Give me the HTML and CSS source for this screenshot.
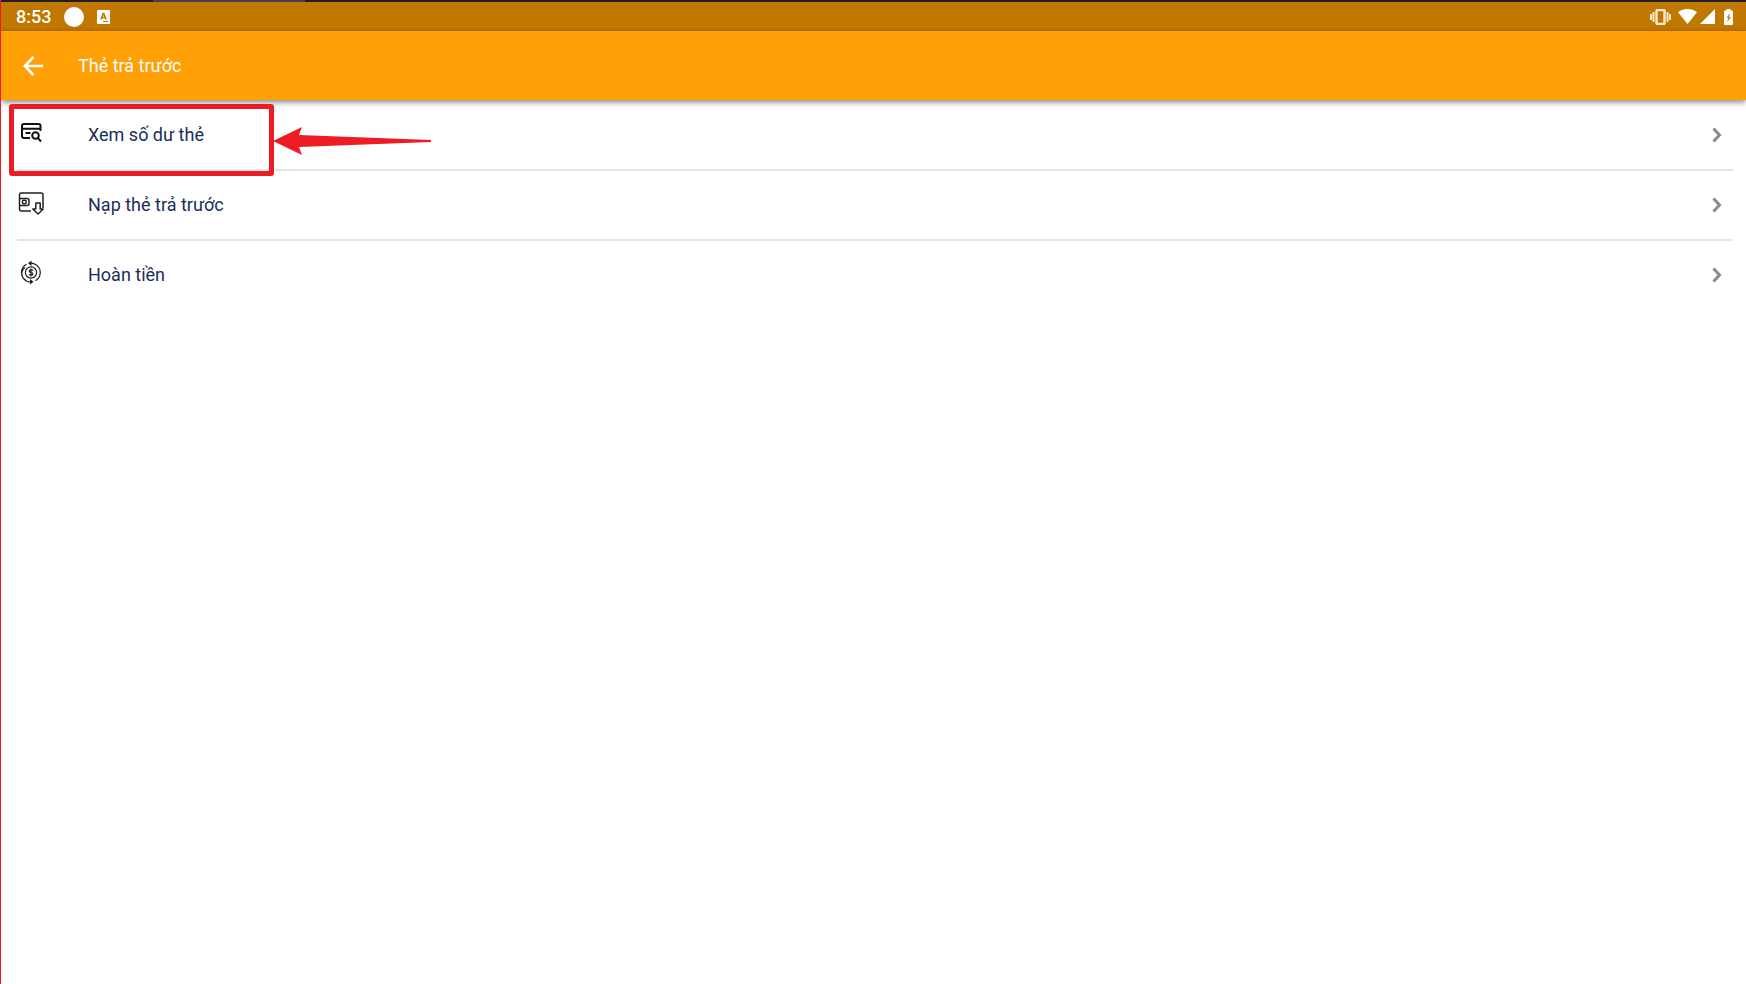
FILE: index.html
```html
<!DOCTYPE html>
<html lang="vi">
<head>
    <meta charset="UTF-8">
    <meta name="viewport" content="width=device-width, initial-scale=1.0">
    <title>Thẻ trả trước</title>
    <link rel="stylesheet" href="styles.css">
</head>
<body>
    <div class="window-strip"><div class="window-tab"></div></div>
    <div class="status-bar">
        <span class="clock">8:53</span>
        <span class="dot"></span>
        <svg class="app-badge" width="13" height="14" viewBox="0 0 13 14">
            <rect width="13" height="14" rx="1" fill="#fff"/>
            <path d="M4 9.5 6.2 3.5h.6L9 9.5M5 7.5h3" fill="none" stroke="#c07800" stroke-width="1.6"/>
            <path d="M6 11.5h5" stroke="#c07800"/>
        </svg>
        <div class="status-icons">
            <svg class="vibrate" width="21" height="16" viewBox="0 0 21 16" fill="none" stroke="#fbe9cf">
                <rect x="6.5" y="1" width="8" height="14" rx="1" stroke-width="2.4"/>
                <path d="M3.5 3v10M17.5 3v10" stroke-width="2"/>
                <path d="M1 5v6M20 5v6" stroke-width="2"/>
            </svg>
            <svg class="wifi" width="19" height="15" viewBox="0 0 19 15">
                <path d="M0 3.2C5.5-1 13.5-1 19 3.2L9.5 15z" fill="#fff"/>
            </svg>
            <svg class="signal" width="15" height="15" viewBox="0 0 15 15">
                <path d="M15 0v15H0z" fill="#fff"/>
            </svg>
            <svg class="battery" width="9" height="16" viewBox="0 0 9 16">
                <path d="M2.5 0h4v1.5H8q1 0 1 1V15q0 1-1 1H1q-1 0-1-1V2.5q0-1 1-1h1.5z" fill="#fff"/>
                <path d="M6.3 4 2.5 8.8h2L3 13.5l4-5.5H5z" fill="#c07800"/>
            </svg>
        </div>
    </div>
    <header class="app-bar">
        <button class="back" type="button" aria-label="Quay lại">
            <svg width="20" height="20" viewBox="0 0 20 20" fill="none" stroke="#fff" stroke-width="2.7">
                <path d="M10.500 1 1.800 10l8.700 9M2 10h18"/>
            </svg>
        </button>
        <h1>Thẻ trả trước</h1>
    </header>
    <main class="menu">
        <a class="menu-item" href="#so-du">
            <svg class="menu-icon" width="28" height="28" viewBox="0 0 28 28" fill="none" stroke="#111" stroke-width="2">
                <path d="M23.5 12V7q0-2-2-2H7Q5 5 5 7v10q0 2 2 2h6M5 9.800h18.500M8.500 14h5"/>
                <circle cx="18.500" cy="16.500" r="3.300"/>
                <path d="m20.800 18.800 3.200 3.700"/>
            </svg>
            <span class="menu-label">Xem số dư thẻ</span>
            <svg class="chevron" width="10" height="16" viewBox="0 0 10 16"><path d="m1.500 1.500 6 6.500-6 6.500"/></svg>
        </a>
        <a class="menu-item" href="#nap-the">
            <svg class="menu-icon" width="28" height="28" viewBox="0 0 28 28" fill="none" stroke="#222" stroke-width="1.5">
                <path d="M26 19V6q0-2-2-2H4Q2.500 4 2.500 5.500V20q0 2 2 2H14"/>
                <path d="M2.500 9.500H10q2 0 2 2v3q0 2-2 2H2.500"/>
                <rect x="5.500" y="11.200" width="3.600" height="3.600" rx="1"/>
                <path d="M18.800 14h4.400v6h3L21 25l-5.200-5h3z" stroke-linejoin="round"/>
            </svg>
            <span class="menu-label">Nạp thẻ trả trước</span>
            <svg class="chevron" width="10" height="16" viewBox="0 0 10 16"><path d="m1.500 1.500 6 6.500-6 6.500"/></svg>
        </a>
        <a class="menu-item" href="#hoan-tien">
            <svg class="menu-icon" width="28" height="28" viewBox="0 0 28 28" fill="none" stroke="#222" stroke-width="1.2">
                <circle cx="14" cy="13.500" r="5.600"/>
                <path d="M15.800 11.700q-.4-1-1.800-1c-2.300 0-2.300 2.600 0 2.800s2.300 2.800 0 2.800q-1.400 0-1.800-1M14 9.500v8"/>
                <path d="M9.500 5.200A9.400 9.400 0 0 0 9.500 21.800M13.500 4.200A9.400 9.400 0 0 1 18.500 21.800M8 8.500a8 8 0 0 0 6 14.200"/>
                <path d="m14.500 1.500-3.500 2.700 3.500 2.700zM13 20l3.500 2.700L13 25.400z" fill="#222" stroke="none"/>
            </svg>
            <span class="menu-label">Hoàn tiền</span>
            <svg class="chevron" width="10" height="16" viewBox="0 0 10 16"><path d="m1.500 1.500 6 6.500-6 6.500"/></svg>
        </a>
        <div class="highlight"></div>
        <svg class="pointer" width="158" height="28" viewBox="0 0 158 28">
            <path d="M0 14 29 0l-3 8 132 5v2L26 20l3 8z" fill="#ed1c24"/>
        </svg>
    </main>
</body>
</html>
```

FILE: styles.css
```css
* {
    box-sizing: border-box;
}
body {
    margin: 0;
    min-height: 100vh;
    border-left: 1px solid #ed1c24;
    background-color: #fff;
    font-family: Roboto, sans-serif;
}
.window-strip {
    height: 2px;
    padding-left: 152px;
    background-color: #221f24;
}
.window-tab {
    width: 152px;
    height: 2px;
    background-color: #45404a;
}
.status-bar {
    display: flex;
    align-items: center;
    height: 29px;
    padding: 0 13px 0 15px;
    background-color: #c07800;
    color: #fff;
}
.clock {
    font-size: 18px;
    font-weight: 500;
}
.dot {
    width: 20px;
    height: 20px;
    margin-left: 13px;
    border-radius: 50%;
    background-color: #fff;
}
.app-badge {
    margin-left: 13px;
}
.status-icons {
    display: flex;
    align-items: center;
    margin-left: auto;
}
.wifi {
    margin-left: 7px;
}
.signal {
    margin-left: 3px;
}
.battery {
    margin-left: 9px;
}
.app-bar {
    position: relative;
    display: flex;
    align-items: center;
    height: 69px;
    padding-left: 12px;
    background-color: #ffa006;
    box-shadow: 0 2px 6px rgba(0, 0, 0, 0.5);
    color: #fff;
}
.back {
    display: flex;
    padding: 10px;
    border: none;
    background: none;
    cursor: pointer;
}
.app-bar h1 {
    margin: 0 0 0 25px;
    font-size: 18px;
    font-weight: 400;
}
.menu {
    position: relative;
    padding: 1px 13px 0 16px;
}
.menu-item {
    display: flex;
    align-items: center;
    height: 70px;
    padding-right: 11px;
    border-bottom: 2px solid #e6e6e6;
    color: #1c2d57;
    text-decoration: none;
}
.menu-item:nth-child(3) {
    border-bottom-color: transparent;
}
.menu-icon {
    margin-bottom: 4px;
}
.menu-label {
    flex: 1;
    margin-bottom: 2px;
    margin-left: 43px;
    font-size: 18px;
}
.chevron {
    fill: none;
    stroke: #8a8a8a;
    stroke-width: 3px;
}
/* callout drawn over the first menu item */
.highlight {
    position: absolute;
    top: 4px;
    left: 8px;
    width: 265px;
    height: 72px;
    border: 5px solid #ed1c24;
    border-radius: 3px;
}
.pointer {
    position: absolute;
    top: 27px;
    left: 272px;
}
```
